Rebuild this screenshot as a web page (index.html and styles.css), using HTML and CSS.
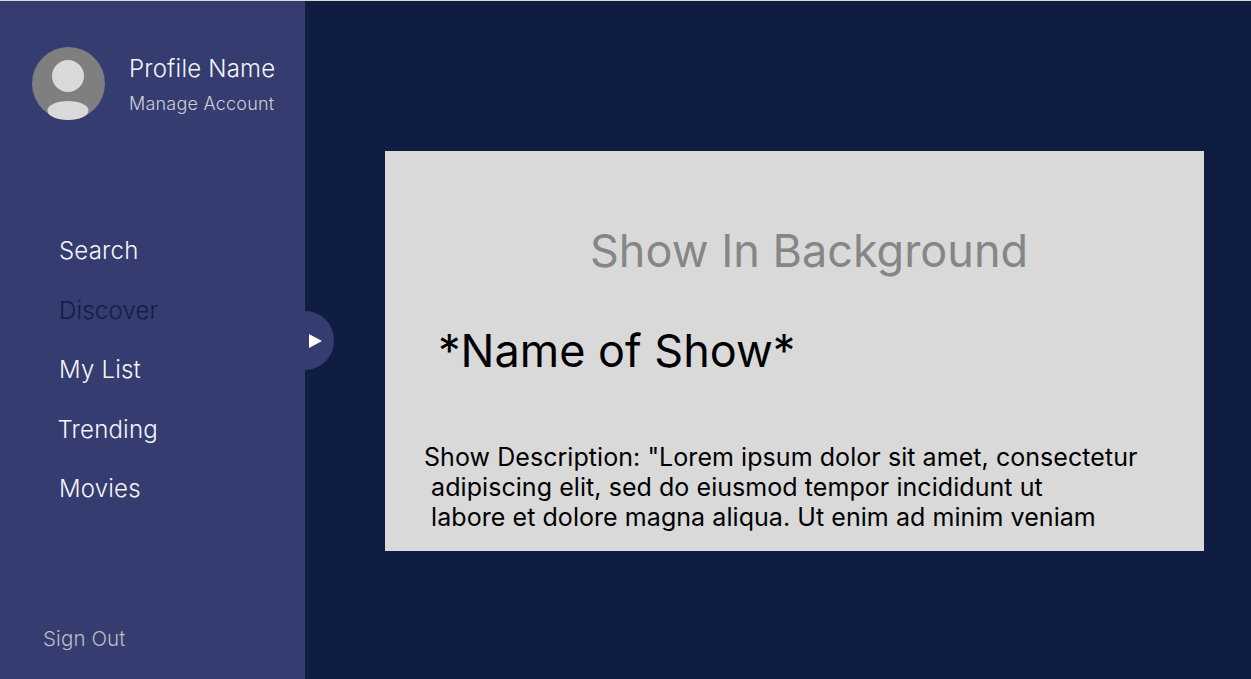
FILE: index.html
```html
<!DOCTYPE html>
<html lang="en">
<head>
  <meta charset="UTF-8" />
  <title>Profile</title>
  <link rel="stylesheet" href="styles.css">
</head>
<body>
  <div class="app">
    <aside class="sidebar">
      <div class="profile">
        <svg class="avatar" viewBox="0 0 73 73" width="73" height="73">
          <circle cx="36.5" cy="36.5" r="36.5" fill="#7f7f7f"/>
          <circle cx="36" cy="29" r="16" fill="#d9d9d9"/>
          <ellipse cx="36" cy="63.500" rx="20.500" ry="9.500" fill="#d9d9d9"/>
        </svg>
        <div class="profile-text">
          <div class="profile-name">Profile Name</div>
          <div class="profile-link">Manage Account</div>
        </div>
      </div>
      <nav class="nav">
        <a class="nav-item">Search</a>
        <a class="nav-item nav-current">Discover</a>
        <a class="nav-item">My List</a>
        <a class="nav-item nav-trending">Trending</a>
        <a class="nav-item">Movies</a>
      </nav>
      <div class="signout">Sign Out</div>
      <div class="toggle"><span class="arrow"></span></div>
    </aside>
    <main class="content">
      <section class="card">
        <h2 class="card-bg">Show In Background</h2>
        <h1 class="card-name">*Name of Show*</h1>
        <p class="card-desc">Show Description: "Lorem ipsum dolor sit amet, consectetur<br>
        &nbsp;adipiscing elit, sed do eiusmod tempor incididunt ut<br>
        &nbsp;labore et dolore magna aliqua. Ut enim ad minim veniam</p>
      </section>
    </main>
  </div>
</body>
</html>
```

FILE: styles.css
```css
html, body { margin: 0; height: 100%; }
body { font-family: Inter, "Liberation Sans", sans-serif; background: #0e1d41; overflow: hidden; }
.app { display: flex; height: 678px; border-top: 1px solid #d9d9d9; }

.sidebar {
  position: relative;
  width: 305px;
  flex-shrink: 0;
  display: flex;
  flex-direction: column;
  background: #343c70;
}
.profile { display: flex; align-items: center; gap: 24px; padding: 46px 0 0 32px; }
.avatar { display: block; flex-shrink: 0; }
.profile-text { padding-top: 1px; }
.profile-name { font-size: 24px; line-height: 29px; font-weight: 350; letter-spacing: 0.2px; color: #f5f5f8; }
.profile-link { font-size: 18px; line-height: 22px; margin-top: 10px; font-weight: 350; letter-spacing: 0.22px; color: #cfcfd6; }

.nav { display: flex; flex-direction: column; margin-top: 116px; padding-left: 59px; }
.nav-item { font-size: 24px; line-height: 29px; margin-bottom: 30.500px; font-weight: 350; letter-spacing: 0.2px; color: #f5f5f8; }
.nav-current { color: #111e45; }
.nav-trending { margin-left: -1.500px; }

.signout { margin-top: auto; padding: 0 0 28px 43px; font-size: 20.500px; line-height: 24px; font-weight: 350; letter-spacing: 0.1px; color: #bcbcc2; }

.toggle {
  position: absolute;
  left: 305px;
  top: 310px;
  width: 29px;
  height: 59px;
  display: flex;
  align-items: center;
  background: #343c70;
  border-radius: 0 30px 30px 0;
}
.arrow {
  margin-left: 4px;
  border-left: 13px solid #fff;
  border-top: 7px solid transparent;
  border-bottom: 7px solid transparent;
}

.content { flex: 1; padding: 150px 47px 0 80px; }
.card { height: 400px; box-sizing: border-box; padding-top: 73px; background: #d9d9d9; }
.card-bg { margin: 0; padding-left: 205px; font-size: 45px; line-height: 54px; font-weight: 400; color: #868686; }
.card-name { margin: 46px 0 0; padding-left: 53px; font-size: 45px; line-height: 54px; font-weight: 400; color: #000; }
.card-desc { margin: 64px 0 0; padding-left: 39px; font-size: 25px; line-height: 30px; font-weight: 400; letter-spacing: 0.06px; color: #000; }
```
